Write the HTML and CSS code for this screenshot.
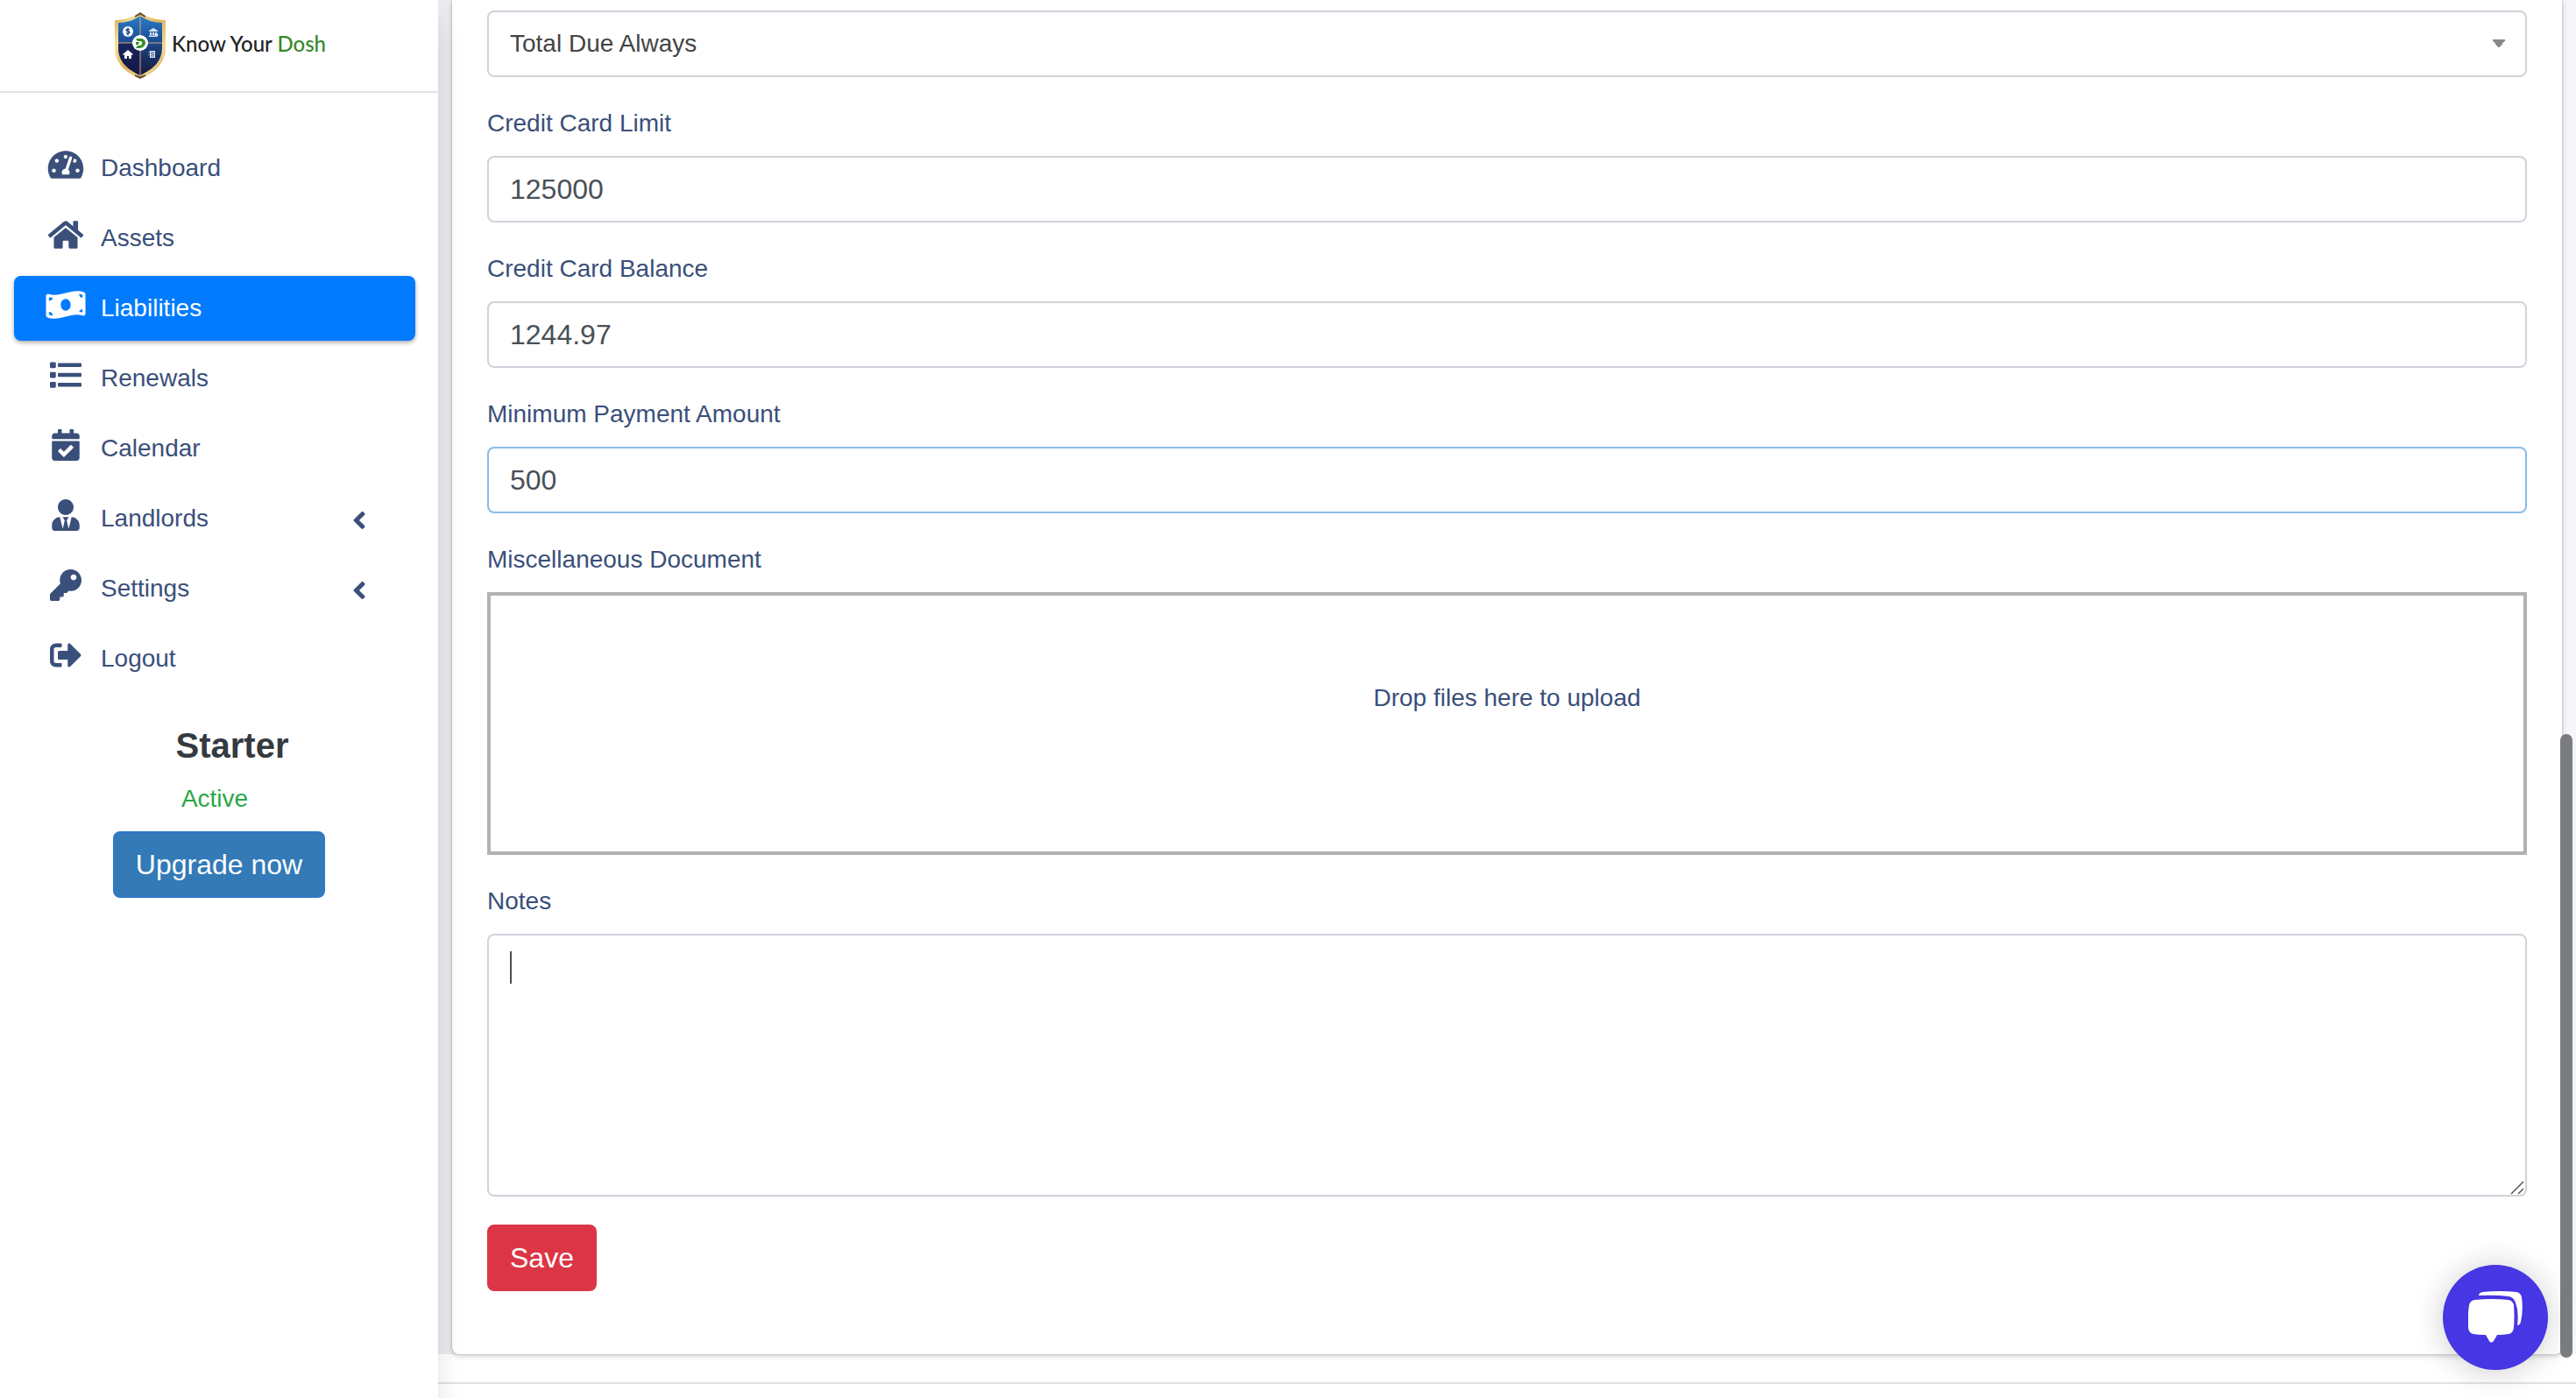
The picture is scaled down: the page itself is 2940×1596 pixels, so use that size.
FILE: index.html
```html
<!DOCTYPE html>
<html lang="en">
<head>
  <meta charset="UTF-8">
  <meta name="viewport" content="width=device-width, initial-scale=1.0">
  <title>Know Your Dosh</title>
  <link rel="stylesheet" href="styles.css">
</head>
<body>
  <div class="wrapper">
    <aside class="sidebar">
      <a href="#" class="brand">
        <svg class="brand-logo" viewBox="0 0 60 76" width="60" height="76" aria-hidden="true">
          <defs>
            <linearGradient id="gold" x1="0" y1="0" x2="1" y2="1">
              <stop offset="0" stop-color="#d3a548"/>
              <stop offset=".25" stop-color="#f6e3a0"/>
              <stop offset=".5" stop-color="#dcb45a"/>
              <stop offset=".75" stop-color="#f3dc98"/>
              <stop offset="1" stop-color="#b98a3a"/>
            </linearGradient>
            <linearGradient id="navy" x1=".5" y1="0" x2=".5" y2="1">
              <stop offset="0" stop-color="#2a7cc8"/>
              <stop offset=".4" stop-color="#1d4f98"/>
              <stop offset=".6" stop-color="#1a3a72"/>
              <stop offset="1" stop-color="#14183c"/>
            </linearGradient>
          </defs>
          <path fill="url(#gold)" d="M30 0C22 6 11 9 1 9v31c0 18 12 29 29 36 17-7 29-18 29-36V9C49 9 38 6 30 0z"/>
          <path fill="#6d5232" d="M30 0l-6 4v2l6-3 6 3V4zM30 76l-6-3v-2l6 2 6-2v2z"/>
          <path fill="url(#navy)" d="M30 4C23 9 14 12 5 12v28c0 16 10 25 25 32 15-7 25-16 25-32V12C46 12 37 9 30 4z"/>
          <path fill="#17174a" opacity=".7" d="M5 35h25v37C15 65 5 56 5 40z"/>
          <path stroke="#d9a878" stroke-width="1" d="M30 4v68M5 35h50"/>
          <circle cx="30" cy="35" r="9" fill="#fff"/>
          <path fill="#3b8f2a" d="M25 30h5c4 0 6 2 6 5s-3 6-7 6h-4l2-3h2c2 0 3-1 3-3s-1-2-3-2h-2z"/>
          <path fill="#3b8f2a" d="M25 34h4l-1 3h-3z"/>
          <circle cx="16" cy="22" r="6" fill="#fff"/>
          <path fill="none" stroke="#1c4486" stroke-width="1.3" d="M18 20c-1-1-4-1-4 .5s4 1 4 2.600-3 1.700-4 .5M16 17.500v9"/>
          <path fill="#dbe7f5" d="M40 21l5-3 5 3v1H40zM41 23h2v3h-2zM44 23h2v3h-2zM47 23h2v2h-2zM40 26.500h7v1.500h-7z"/>
          <circle cx="48.500" cy="26" r="2" fill="#dbe7f5"/>
          <path fill="#fff" d="M10 48l6-5 6 5-1 1-1-1v5h-3v-3h-2v3h-3v-5l-1 1z"/>
          <path fill="#dbe7f5" d="M41 44h6v8h-6zM39.500 45h1v1h-1zM39.500 48h1v1h-1z"/>
          <path stroke="#17305f" stroke-width=".8" d="M42 46h4M42 48h4M42 50h4"/>
        </svg>
        <span class="brand-text">Know Your <span class="brand-green">Dosh</span></span>
      </a>

      <nav class="nav">
        <a href="#" class="nav-link">
          <svg class="nav-icon" viewBox="0 0 576 512" width="40" height="36"><path d="M288 32C128.940 32 0 160.940 0 320c0 52.800 14.250 102.260 39.060 144.800 5.610 9.620 16.300 15.200 27.440 15.200h443c11.140 0 21.830-5.580 27.440-15.200C561.750 422.260 576 372.800 576 320c0-159.060-128.940-288-288-288zm0 64c14.710 0 26.580 10.130 30.320 23.650-1.110 2.260-2.640 4.230-3.450 6.670l-9.220 27.670c-5.130 3.490-10.970 6.010-17.640 6.010-17.670 0-32-14.330-32-32S270.330 96 288 96zM96 384c-17.670 0-32-14.330-32-32s14.330-32 32-32 32 14.330 32 32-14.330 32-32 32zm48-160c-17.670 0-32-14.330-32-32s14.330-32 32-32 32 14.330 32 32-14.330 32-32 32zm246.770-72.410l-61.330 184C343.130 347.330 352 364.540 352 384c0 11.720-3.380 22.550-8.880 32H232.880c-5.500-9.450-8.880-20.280-8.880-32 0-33.940 26.500-61.430 59.900-63.590l61.340-184.010c4.170-12.560 17.730-19.450 30.360-15.170 12.570 4.190 19.350 17.790 15.170 30.360zm14.660 57.200l15.520-46.550c3.470-1.290 7.130-2.230 11.050-2.230 17.670 0 32 14.330 32 32s-14.330 32-32 32c-11.380 0-20.890-6.280-26.570-15.220zM480 384c-17.670 0-32-14.330-32-32s14.330-32 32-32 32 14.330 32 32-14.330 32-32 32z"/></svg>
          <span>Dashboard</span>
        </a>
        <a href="#" class="nav-link">
          <svg class="nav-icon" viewBox="0 0 576 512" width="40" height="36"><path d="M280.370 148.260L96 300.110V464a16 16 0 0 0 16 16l112.060-.290a16 16 0 0 0 15.920-16V368a16 16 0 0 1 16-16h64a16 16 0 0 1 16 16v95.640a16 16 0 0 0 16 16.050L464 480a16 16 0 0 0 16-16V300L295.670 148.260a12.190 12.190 0 0 0-15.300 0zM571.600 251.470L488 182.560V44.050a12 12 0 0 0-12-12h-56a12 12 0 0 0-12 12v72.610L318.470 43a48 48 0 0 0-61 0L4.340 251.470a12 12 0 0 0-1.600 16.900l25.500 31A12 12 0 0 0 45.150 301l235.220-193.740a12.190 12.190 0 0 1 15.300 0L530.900 301a12 12 0 0 0 16.900-1.600l25.500-31a12 12 0 0 0-1.700-16.930z"/></svg>
          <span>Assets</span>
        </a>
        <a href="#" class="nav-link active">
          <svg class="nav-icon" viewBox="0 0 640 512" width="45" height="36"><path d="M621.160 54.460C582.370 38.190 543.550 32 504.750 32c-123.170-.010-246.330 62.340-369.500 62.340-30.890 0-61.760-3.920-92.650-13.720-3.470-1.100-6.950-1.620-10.350-1.620C15.040 79 0 92.320 0 110.810v317.260c0 12.630 7.230 24.600 18.840 29.460C57.630 473.810 96.450 480 135.250 480c123.170 0 246.340-62.350 369.510-62.350 30.890 0 61.760 3.920 92.650 13.720 3.470 1.100 6.950 1.620 10.350 1.620 17.210 0 32.250-13.320 32.250-31.810V83.930c-.010-12.640-7.240-24.600-18.850-29.470zM48 132.220c20.120 5.040 41.120 7.570 62.720 8.930C104.840 170.540 79 192.690 48 192.690v-60.470zm0 285v-47.780c34.370 0 62.180 27.270 63.710 61.400-22.530-1.810-43.590-6.310-63.710-13.620zM320 352c-44.190 0-80-42.990-80-96 0-53.020 35.820-96 80-96s80 42.980 80 96c0 53.030-35.830 96-80 96zm272 27.780c-17.520-4.390-35.710-6.850-54.320-8.440 5.870-26.080 27.500-45.880 54.320-49.280v57.720zm0-236.110c-30.890-3.910-54.860-29.700-55.810-61.550 19.540 2.170 38.090 6.230 55.810 12.660v48.890z"/></svg>
          <span>Liabilities</span>
        </a>
        <a href="#" class="nav-link">
          <svg class="nav-icon" viewBox="0 0 512 512" width="36" height="36"><path d="M80 368H16a16 16 0 0 0-16 16v64a16 16 0 0 0 16 16h64a16 16 0 0 0 16-16v-64a16 16 0 0 0-16-16zm0-320H16A16 16 0 0 0 0 64v64a16 16 0 0 0 16 16h64a16 16 0 0 0 16-16V64a16 16 0 0 0-16-16zm0 160H16a16 16 0 0 0-16 16v64a16 16 0 0 0 16 16h64a16 16 0 0 0 16-16v-64a16 16 0 0 0-16-16zm416 176H144a16 16 0 0 0-16 16v32a16 16 0 0 0 16 16h352a16 16 0 0 0 16-16v-32a16 16 0 0 0-16-16zm0-320H144a16 16 0 0 0-16 16v32a16 16 0 0 0 16 16h352a16 16 0 0 0 16-16V80a16 16 0 0 0-16-16zm0 160H144a16 16 0 0 0-16 16v32a16 16 0 0 0 16 16h352a16 16 0 0 0 16-16v-32a16 16 0 0 0-16-16z"/></svg>
          <span>Renewals</span>
        </a>
        <a href="#" class="nav-link">
          <svg class="nav-icon" viewBox="0 0 448 512" width="32" height="36"><path d="M436 160H12c-6.627 0-12-5.373-12-12v-36c0-26.510 21.490-48 48-48h48V12c0-6.627 5.373-12 12-12h40c6.627 0 12 5.373 12 12v52h128V12c0-6.627 5.373-12 12-12h40c6.627 0 12 5.373 12 12v52h48c26.510 0 48 21.490 48 48v36c0 6.627-5.373 12-12 12zM12 192h424c6.627 0 12 5.373 12 12v260c0 26.510-21.490 48-48 48H48c-26.510 0-48-21.490-48-48V204c0-6.627 5.373-12 12-12zm333.296 95.947l-28.169-28.398c-4.667-4.705-12.265-4.736-16.970-.068L194.120 364.665l-45.980-46.352c-4.667-4.705-12.266-4.736-16.971-.068l-28.397 28.170c-4.705 4.667-4.736 12.265-.068 16.970l82.601 83.269c4.667 4.705 12.265 4.736 16.970.068l142.953-141.805c4.705-4.667 4.736-12.265.068-16.970z"/></svg>
          <span>Calendar</span>
        </a>
        <a href="#" class="nav-link">
          <svg class="nav-icon" viewBox="0 0 448 512" width="32" height="36"><path d="M224 256c70.700 0 128-57.300 128-128S294.700 0 224 0 96 57.300 96 128s57.300 128 128 128zm95.800 32.600L272 480l-32-136 32-56h-96l32 56-32 136-47.800-191.400C56.900 292 0 350.300 0 422.400V464c0 26.500 21.500 48 48 48h352c26.500 0 48-21.500 48-48v-41.600c0-72.100-56.900-130.400-128.200-133.800z"/></svg>
          <span>Landlords</span>
          <svg class="nav-arrow" viewBox="0 0 256 512" width="16" height="32"><path d="M31.700 239l136-136c9.400-9.400 24.600-9.400 33.900 0l22.600 22.600c9.400 9.400 9.400 24.600 0 33.900L127.900 256l96.400 96.400c9.400 9.400 9.400 24.600 0 33.900L201.700 409c-9.400 9.400-24.600 9.400-33.900 0l-136-136c-9.500-9.400-9.500-24.600-.1-34z"/></svg>
        </a>
        <a href="#" class="nav-link">
          <svg class="nav-icon" viewBox="0 0 512 512" width="36" height="36"><path d="M512 176.001C512 273.203 433.202 352 336 352c-11.220 0-22.190-1.062-32.827-3.069l-24.012 27.014A23.999 23.999 0 0 1 261.223 384H224v40c0 13.255-10.745 24-24 24h-40v40c0 13.255-10.745 24-24 24H24c-13.255 0-24-10.745-24-24v-78.059c0-6.365 2.529-12.470 7.029-16.971l161.802-161.802C163.108 213.814 160 195.271 160 176 160 78.798 238.797.001 335.999 0 433.488-.001 512 78.511 512 176.001zM336 128c0 26.510 21.490 48 48 48s48-21.490 48-48-21.490-48-48-48-48 21.490-48 48z"/></svg>
          <span>Settings</span>
          <svg class="nav-arrow" viewBox="0 0 256 512" width="16" height="32"><path d="M31.700 239l136-136c9.400-9.400 24.600-9.400 33.900 0l22.600 22.600c9.400 9.400 9.400 24.600 0 33.900L127.900 256l96.400 96.400c9.400 9.400 9.400 24.600 0 33.900L201.700 409c-9.400 9.400-24.600 9.400-33.900 0l-136-136c-9.500-9.400-9.500-24.600-.1-34z"/></svg>
        </a>
        <a href="#" class="nav-link">
          <svg class="nav-icon" viewBox="0 0 512 512" width="36" height="36"><path d="M497 273L329 441c-15 15-41 4.500-41-17v-96H152c-13.300 0-24-10.700-24-24v-96c0-13.300 10.700-24 24-24h136V88c0-21.400 25.900-32 41-17l168 168c9.300 9.400 9.300 24.600 0 34zM192 436v-40c0-6.600-5.400-12-12-12H96c-17.700 0-32-14.300-32-32V160c0-17.700 14.300-32 32-32h84c6.600 0 12-5.400 12-12V76c0-6.600-5.400-12-12-12H96c-53 0-96 43-96 96v192c0 53 43 96 96 96h84c6.600 0 12-5.400 12-12z"/></svg>
          <span>Logout</span>
        </a>
      </nav>

      <div class="plan">
        <h4 class="plan-name">Starter</h4>
        <span class="plan-status">Active</span>
        <button type="button" class="btn btn-upgrade">Upgrade now</button>
      </div>
    </aside>

    <div class="main">
      <div class="content">
        <form class="card">
          <div class="form-group">
            <select class="form-control" id="payment-type" aria-label="Payment type">
              <option>Total Due Always</option>
            </select>
          </div>
          <div class="form-group">
            <label for="limit">Credit Card Limit</label>
            <input class="form-control" type="text" id="limit" value="125000">
          </div>
          <div class="form-group">
            <label for="balance">Credit Card Balance</label>
            <input class="form-control" type="text" id="balance" value="1244.97">
          </div>
          <div class="form-group">
            <label for="minimum">Minimum Payment Amount</label>
            <input class="form-control highlighted" type="text" id="minimum" value="500">
          </div>
          <div class="form-group">
            <label for="document">Miscellaneous Document</label>
            <button type="button" class="dropzone" id="document">Drop files here to upload</button>
          </div>
          <div class="form-group">
            <label for="notes">Notes</label>
            <div class="notes-box">
              <textarea class="form-control" id="notes"></textarea>
              <span class="caret"></span>
              <svg class="grip" viewBox="0 0 16 16" width="16" height="16"><path d="M1 15L15 1M9 15l6-6"/></svg>
            </div>
          </div>
          <div class="form-group">
            <button type="submit" class="btn btn-save">Save</button>
          </div>
        </form>
      </div>
      <footer class="footer"></footer>
    </div>
  </div>

  <div class="scroll-thumb"></div>
  <button type="button" class="chat" aria-label="Open chat">
    <svg viewBox="0 0 62 60" width="62" height="60"><path d="M7 10Q27 8 46 10Q51 11 52 16Q53 29 52 42Q51 48 46 49Q39 50 33 50L29 57Q26 60 24 57L20 50Q13 50 6 49Q1 48 0 42Q-1 29 1 16Q2 11 7 10z"/><path d="M12 5Q12 2 16 1Q36-1 55 1Q60 2 61 7Q63 22 60 35Q59 39 56 39Q58 24 54 13Q52 7 46 6Q32 4 12 5z"/></svg>
  </button>
</body>
</html>
```
FILE: styles.css
```css
* {
  box-sizing: border-box;
}

body {
  margin: 0;
  font-family: "Liberation Sans", Arial, sans-serif;
  font-size: 28px;
  line-height: 42px;
  color: #3a4f7a;
  background-color: #fff;
  overflow: hidden;
}

a {
  color: inherit;
  text-decoration: none;
}

.wrapper {
  display: flex;
  min-height: 100vh;
}

/* Sidebar */
.sidebar {
  flex: 0 0 500px;
  background-color: #fff;
  box-shadow: 0 28px 28px rgba(0, 0, 0, 0.12);
  z-index: 1;
}

.brand {
  display: flex;
  justify-content: center;
  align-items: center;
  gap: 6px;
  height: 106px;
  padding-left: 2px;
  border-bottom: 2px solid #dee2e6;
}

.brand-text {
  padding-bottom: 4px;
  font-family: Lato, sans-serif;
  font-size: 24px;
  font-weight: 500;
  color: #222;
}

.brand-green {
  color: #37892a;
}

.nav {
  display: flex;
  flex-direction: column;
  gap: 6px;
  padding: 49px 26px 0 16px;
}

.nav-link {
  display: flex;
  align-items: center;
  height: 74px;
  padding: 0 56px 0 32px;
  border-radius: 8px;
}

.nav-link svg {
  fill: #3a4f7a;
}

.nav-link span {
  flex: 1;
  margin-left: 13px;
}

.nav-icon {
  flex: none;
  width: 54px;
  margin-bottom: 8px;
}

.nav-arrow {
  margin-top: 4px;
}

.nav-link.active {
  color: #fff;
  background-color: #007bff;
  box-shadow: 0 2px 6px rgba(0, 0, 0, 0.12), 0 2px 4px rgba(0, 0, 0, 0.24);
}

.nav-link.active svg {
  fill: #fff;
}

.plan {
  display: flex;
  flex-direction: column;
  align-items: center;
  padding-top: 38px;
}

.plan-name {
  margin: 0 0 16px 30px;
  font-size: 40px;
  line-height: 48px;
  color: #343a40;
}

.plan-status {
  margin: 0 10px 16px 0;
  color: #28a745;
}

.btn {
  padding: 12px 24px;
  border: 2px solid transparent;
  border-radius: 8px;
  font-family: inherit;
  font-size: 32px;
  line-height: 48px;
  color: #fff;
}

.btn-upgrade {
  background-color: #337ab7;
  border-color: #2e78c8;
}

.btn-save {
  display: block;
  background-color: #dc3545;
  border-color: #dc3545;
}

/* Form */
.main {
  flex: 1;
  display: flex;
  flex-direction: column;
}

.content {
  padding: 0 16px;
  background: linear-gradient(to right, #e8eaed, #f4f6f9 60px);
}

.card {
  padding: 12px 40px 40px;
  background-color: #fff;
  border-radius: 0 0 8px 8px;
  box-shadow: 0 0 2px rgba(0, 0, 0, 0.25), 0 2px 6px rgba(0, 0, 0, 0.2);
}

.form-group {
  margin-bottom: 32px;
}

.form-group label {
  display: block;
  margin-bottom: 16px;
}

.form-control {
  display: block;
  width: 100%;
  height: 76px;
  padding: 12px 24px;
  border: 2px solid #ced4da;
  border-radius: 8px;
  outline: none;
  background-color: #fff;
  font-family: inherit;
  font-size: 32px;
  line-height: 48px;
  color: #495057;
}

select.form-control {
  appearance: none;
  font-size: 28px;
  color: #444;
  background-image: conic-gradient(from -38deg at 50% 100%, #888 76deg, transparent 0);
  background-repeat: no-repeat;
  background-position: right 22px top 31px;
  background-size: 16px 10px;
}

.form-control.highlighted {
  border-color: #8bbbe8;
}

.dropzone {
  display: flex;
  justify-content: center;
  align-items: flex-start;
  width: 100%;
  height: 300px;
  padding: 96px 40px;
  border: 4px solid #b2b2b2;
  background-color: #fff;
  font: inherit;
  color: inherit;
}

.notes-box {
  position: relative;
}

textarea.form-control {
  height: 300px;
  resize: none;
}

.caret {
  position: absolute;
  top: 20px;
  left: 26px;
  width: 2px;
  height: 37px;
  background-color: #495057;
}

.grip {
  position: absolute;
  right: 3px;
  bottom: 2px;
  fill: none;
  stroke: #555;
  stroke-width: 1.500;
}

.footer {
  flex: 1;
  margin-top: 32px;
  border-top: 2px solid #dee2e6;
}

/* Floating items */
.scroll-thumb {
  position: fixed;
  top: 838px;
  right: 4px;
  bottom: 46px;
  width: 14px;
  border-radius: 7px;
  background-color: #7b7c7e;
}

.chat {
  position: fixed;
  right: 32px;
  bottom: 32px;
  z-index: 2;
  display: flex;
  justify-content: center;
  align-items: center;
  width: 120px;
  height: 120px;
  padding: 0;
  border: none;
  border-radius: 50%;
  background-color: #4636e3;
  box-shadow: 0 2px 36px rgba(0, 0, 0, 0.2);
}

.chat svg {
  fill: #fff;
}
```
